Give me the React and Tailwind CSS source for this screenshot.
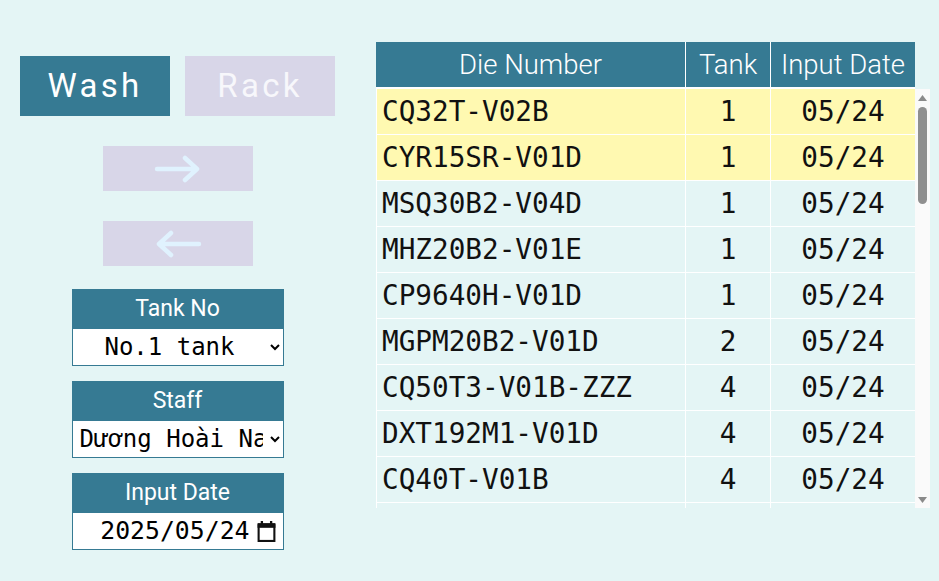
import React, { useState } from "react";

const rows = [
  ["CQ32T-V02B", 1, "05/24", true],
  ["CYR15SR-V01D", 1, "05/24", true],
  ["MSQ30B2-V04D", 1, "05/24"],
  ["MHZ20B2-V01E", 1, "05/24"],
  ["CP9640H-V01D", 1, "05/24"],
  ["MGPM20B2-V01D", 2, "05/24"],
  ["CQ50T3-V01B-ZZZ", 4, "05/24"],
  ["DXT192M1-V01D", 4, "05/24"],
  ["CQ40T-V01B", 4, "05/24"],
];

const mono = { fontFamily: '"DejaVu Sans Mono", monospace' };

function ArrowIcon({ dir }) {
  const d = dir === "right" ? "M3 14 H43 M31 3 L43 14 L31 25" : "M45 14 H5 M17 3 L5 14 L17 25";
  return (
    <svg width="48" height="28" viewBox="0 0 48 28" fill="none">
      <path d={d} stroke="#e0f2fe" strokeWidth="4.5" strokeLinecap="round" strokeLinejoin="round" />
    </svg>
  );
}

function CalendarIcon() {
  return (
    <svg width="21" height="21" viewBox="0 0 20 20" className="shrink-0 w-[21px] h-[21px]">
      <rect x="1.5" y="2" width="17" height="4.5" fill="#111" />
      <rect x="4.5" y="0" width="2.2" height="3" fill="#111" />
      <rect x="13.3" y="0" width="2.2" height="3" fill="#111" />
      <rect x="2.5" y="4" width="15" height="15" fill="none" stroke="#111" strokeWidth="2" />
    </svg>
  );
}

function Field({ label, children }) {
  return (
    <div className="w-[212px] border border-[#367a93] bg-white">
      <div className="h-[39px] bg-[#367a93] text-white text-[23px] flex items-center justify-center font-['Roboto']">
        {label}
      </div>
      <div className="h-[36px] flex items-center">{children}</div>
    </div>
  );
}

export default function App() {
  const [mode, setMode] = useState("wash");

  return (
    <div className="w-[939px] h-[581px] bg-[#e4f5f5] flex gap-[41px] pl-[20px] pt-[42px] font-['Roboto'] overflow-hidden">
      {/* Left controls */}
      <div className="w-[315px] mt-[14px] flex flex-col items-center">
        <div className="w-full flex justify-between">
          <button
            onClick={() => setMode("wash")}
            className="w-[150px] h-[60px] bg-[#367a93] text-white text-[33px] tracking-[0.1em] font-['Roboto']"
          >
            Wash
          </button>
          <button
            onClick={() => setMode("rack")}
            className="w-[150px] h-[60px] bg-[#d8d6e8] text-[#f7f7fb] text-[33px] tracking-[0.1em] font-['Roboto']"
          >
            Rack
          </button>
        </div>

        <button className="mt-[30px] w-[150px] h-[45px] bg-[#d8d6e8] flex items-center justify-center">
          <ArrowIcon dir="right" />
        </button>
        <button className="mt-[30px] w-[150px] h-[45px] bg-[#d8d6e8] flex items-center justify-center">
          <ArrowIcon dir="left" />
        </button>

        <div className="mt-[23px] flex flex-col gap-[15px]">
          <Field label="Tank No">
            <select
              defaultValue="1"
              className="w-full h-full bg-white text-[24px] text-black text-center pr-1"
              style={mono}
            >
              <option value="1">No.1 tank</option>
              <option value="2">No.2 tank</option>
              <option value="3">No.3 tank</option>
            </select>
          </Field>
          <Field label="Staff">
            <select
              defaultValue="nam"
              className="w-full h-full bg-white text-[24px] text-black pl-[3px] pr-1"
              style={mono}
            >
              <option value="nam">Dương Hoài Nam</option>
              <option value="linh">Nguyễn Thị Linh</option>
            </select>
          </Field>
          <Field label="Input Date">
            <div className="w-full h-full flex items-center justify-end gap-[6px] pr-[6px] text-[24.8px] text-black" style={mono}>
              <span>2025/05/24</span>
              <CalendarIcon />
            </div>
          </Field>
        </div>
      </div>

      {/* Table */}
      <div className="flex flex-col">
        <div className="w-[539px] h-[47px] border-b-2 border-white bg-[#367a93] text-white text-[27.5px] font-light grid grid-cols-[310px_85px_1fr]">
          <div className="flex items-center justify-center border-r border-white">Die Number</div>
          <div className="flex items-center justify-center border-r border-white">Tank</div>
          <div className="flex items-center justify-center">Input Date</div>
        </div>
        <div className="flex h-[419px]">
          <div className="w-[539px] h-full overflow-hidden border-l border-white">
            {rows.map(([die, tank, date, hl]) => (
              <div
                key={die}
                className={
                  "h-[46px] border-b border-white grid grid-cols-[309px_85px_1fr] text-[27.7px] text-[#111] " +
                  (hl ? "bg-[#fff9b1]" : "bg-[#e4f5f5]")
                }
                style={mono}
              >
                <div className="flex items-center pl-[5px] border-r border-white whitespace-nowrap">{die}</div>
                <div className="flex items-center justify-center border-r border-white">{tank}</div>
                <div className="flex items-center justify-center">{date}</div>
              </div>
            ))}
            {/* next row, scrolled out of view */}
            <div className="h-[46px] grid grid-cols-[309px_85px_1fr] bg-[#e4f5f5]">
              <div className="border-r border-white" />
              <div className="border-r border-white" />
              <div />
            </div>
          </div>
          {/* scrollbar */}
          <div className="w-[15px] h-full bg-[#fafafa] flex flex-col items-center">
            <div className="h-[17px] flex items-center justify-center">
              <svg width="9" height="6" viewBox="0 0 9 6"><path d="M0 6 L4.5 0 L9 6 Z" fill="#8a8a8a" /></svg>
            </div>
            <div className="mt-[1px] w-[9px] h-[97px] rounded-full bg-[#8f8f8f]" />
            <div className="flex-1" />
            <div className="h-[17px] flex items-center justify-center">
              <svg width="9" height="6" viewBox="0 0 9 6"><path d="M0 0 L9 0 L4.5 6 Z" fill="#8a8a8a" /></svg>
            </div>
          </div>
        </div>
      </div>
    </div>
  );
}
